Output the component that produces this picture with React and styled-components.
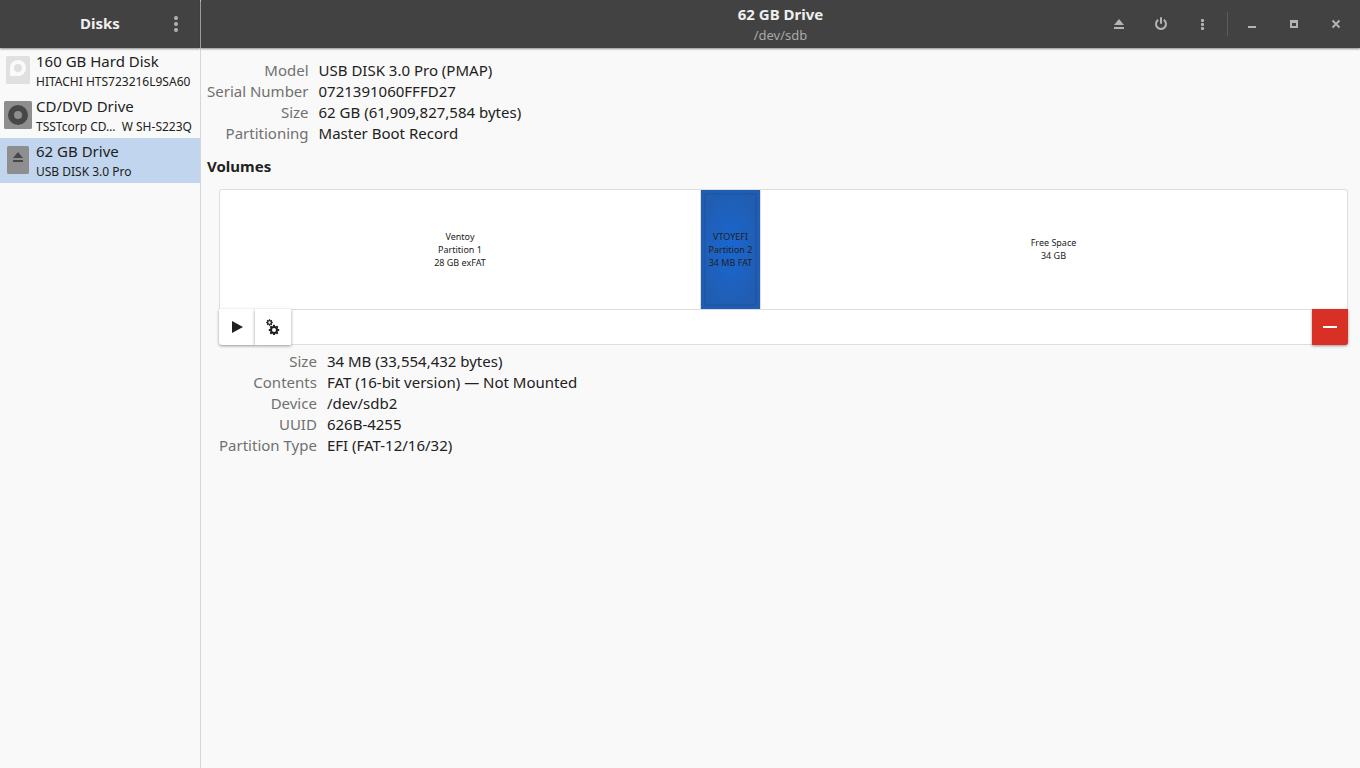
import React, { useState } from "react";
import styled, { createGlobalStyle } from "styled-components";

const GlobalStyle = createGlobalStyle`
  *, *::before, *::after { box-sizing: border-box; }
  body {
    margin: 0;
    background: #f9f9f9;
    color: #212121;
    font-family: "Noto Sans", sans-serif;
    font-size: 15px;
    line-height: 21px;
  }
  button { font: inherit; color: inherit; }
`;

const Window = styled.div`
  display: grid;
  grid-template-columns: 201px minmax(0, 1fr);
  min-height: 100vh;
`;

const Sidebar = styled.aside`
  border-right: 1px solid #d6d6d6;
`;

const HeaderBar = styled.header`
  display: grid;
  grid-template-columns: 1fr auto 1fr;
  align-items: center;
  height: 48px;
  padding: 0 ${(p) => p.$inset}px;
  background: #424242;
  color: #efefef;
  box-shadow: 0 1px 2px rgba(0, 0, 0, 0.45);
`;

const HeaderTitle = styled.div`
  grid-column: 2;
  text-align: center;
`;

const Title = styled.h1`
  margin: 0;
  padding-bottom: 2px;
  font-size: 15px;
  line-height: 20px;
  font-weight: 700;
`;

const Subtitle = styled.p`
  margin: 0;
  font-size: 13px;
  line-height: 18px;
  color: #a9a9a9;
`;

const HeaderActions = styled.div`
  display: flex;
  align-items: center;
  justify-content: flex-end;
`;

const HeaderButton = styled.button`
  display: flex;
  align-items: center;
  justify-content: center;
  flex: none;
  width: ${(p) => p.$width || 42}px;
  height: 36px;
  padding: 0;
  border: 0;
  background: none;
  color: #b4b4b4;
`;

const HeaderDivider = styled.span`
  width: 1px;
  height: 24px;
  margin: 0 3px;
  background: #5c5c5c;
`;

const DriveList = styled.ul`
  margin: 0;
  padding: 0;
  list-style: none;
`;

const DriveButton = styled.button`
  display: grid;
  grid-template-columns: 36px minmax(0, 1fr);
  align-items: start;
  width: 100%;
  height: 45px;
  padding: 3px 0 0;
  border: 0;
  text-align: left;
  background: ${(p) => (p.$selected ? "#c2d5ee" : "transparent")};
`;

const DriveIcon = styled.svg`
  width: 36px;
  height: 36px;
  margin-top: 1px;
`;

const DriveName = styled.span`
  display: block;
  line-height: 20px;
  margin-bottom: 3px;
`;

const DriveModel = styled.span`
  display: block;
  font-size: 12px;
  line-height: 16px;
  white-space: pre;
`;

const Content = styled.main`
  padding: 12px 12px 24px 6px;
`;

const Details = styled.dl`
  display: grid;
  grid-template-columns: max-content minmax(0, 1fr);
  column-gap: 10px;
  margin: 0;
`;

const Label = styled.dt`
  text-align: right;
  color: #707070;
`;

const Value = styled.dd`
  margin: 0;
`;

const SectionTitle = styled.h2`
  margin: 12px 0;
  font-size: 15px;
  line-height: 21px;
  font-weight: 700;
`;

const Volumes = styled.section`
  margin-left: 12px;
`;

const VolumeMap = styled.div`
  display: flex;
  height: 120px;
  border: 1px solid #dedede;
  border-bottom: 0;
  border-radius: 3px 3px 0 0;
  background: #ffffff;
`;

const Volume = styled.button`
  flex: ${(p) => p.$share} 1 0;
  min-width: 0;
  padding: 0;
  border: 0;
  font-size: 9px;
  line-height: 13px;
  white-space: nowrap;
  background: transparent;

  & + & {
    box-shadow: inset 1px 0 #dedede;
  }

  &[aria-pressed="true"] {
    background: radial-gradient(ellipse at center, #1967d2, #215db0 75%);
  }
`;

const VolumeText = styled.span`
  display: flex;
  flex-direction: column;
  justify-content: center;
  align-items: center;
  height: ${(p) => (p.$selected ? "calc(100% - 6px)" : "100%")};
  margin: ${(p) => (p.$selected ? "3px 3px 3px 4px" : "0")};
  padding-bottom: 1px;
  border: 2px solid ${(p) => (p.$selected ? "rgba(20, 70, 150, 0.25)" : "transparent")};
  border-radius: 3px;
`;

const Toolbar = styled.div`
  display: flex;
  height: 36px;
  margin-bottom: 6px;
  border: 1px solid #dedede;
  border-radius: 0 0 3px 3px;
  background: #ffffff;
`;

const ToolButton = styled.button`
  display: flex;
  align-items: center;
  justify-content: center;
  width: 36px;
  height: 36px;
  margin: -1px 0;
  padding: 0;
  border: 0;
  background: #ffffff;
  color: #212121;
  box-shadow: 0 1px 3px rgba(0, 0, 0, 0.4);

  &:first-child {
    margin-left: -1px;
    border-radius: 0 0 0 3px;
  }
`;

const DeleteButton = styled(ToolButton)`
  margin-left: auto;
  margin-right: -1px;
  border-radius: 0 0 3px 0;
  background: #d93025;
  color: #ffffff;
`;

const Glyph = ({ size = 16, children }) => (
  <svg width={size} height={size} viewBox="0 0 16 16" fill="currentColor" aria-hidden="true">
    {children}
  </svg>
);

const MenuGlyph = () => (
  <Glyph>
    <circle cx="8" cy="2" r="2" />
    <circle cx="8" cy="8" r="2" />
    <circle cx="8" cy="14" r="2" />
  </Glyph>
);

const SmallMenuGlyph = () => (
  <Glyph>
    <rect x="6" y="3" width="3" height="3" rx="1" />
    <rect x="6" y="7" width="3" height="3" rx="1" />
    <rect x="6" y="11" width="3" height="3" rx="1" />
  </Glyph>
);

const EjectGlyph = () => (
  <Glyph>
    <path d="M8 3 13 9H3z" />
    <rect x="3" y="11" width="10" height="2" />
  </Glyph>
);

const PowerGlyph = () => (
  <Glyph>
    <path d="M5.2 3.8a5 5 0 1 0 5.6 0" fill="none" stroke="currentColor" strokeWidth="2" />
    <rect x="7" y="1" width="2" height="7" rx="1" />
  </Glyph>
);

const gearTeeth = [0, 45, 90, 135, 180, 225, 270, 315];

const Gear = ({ x, y, radius, stroke, tooth }) => (
  <g transform={`translate(${x} ${y})`}>
    <circle r={radius} fill="none" stroke="currentColor" strokeWidth={stroke} />
    {gearTeeth.map((angle) => (
      <rect
        key={angle}
        x={-tooth / 2}
        y={-(radius + stroke / 2 + tooth * 0.6)}
        width={tooth}
        height={tooth}
        transform={`rotate(${angle})`}
      />
    ))}
  </g>
);

const HardDiskIcon = () => (
  <DriveIcon viewBox="0 0 36 36" aria-hidden="true">
    <rect x="6" y="4" width="24" height="28" rx="1.5" fill="#e0e0e0" />
    <path d="M10 16a8 8 0 1 1 8 8h-7a1 1 0 0 1-1-1z" fill="#fafafa" />
    <circle cx="18" cy="16" r="4" fill="#e0e0e0" />
  </DriveIcon>
);

const OpticalIcon = () => (
  <DriveIcon viewBox="0 0 36 36" aria-hidden="true">
    <rect x="4" y="4" width="28" height="28" rx="1.5" fill="#8e8e8e" />
    <circle cx="18" cy="18" r="10" fill="#474747" />
    <circle cx="18" cy="18" r="4" fill="#8e8e8e" />
  </DriveIcon>
);

const RemovableIcon = () => (
  <DriveIcon viewBox="0 0 36 36" aria-hidden="true">
    <rect x="7" y="4" width="22" height="28" rx="1.5" fill="#8e8e8e" />
    <path d="m18 10 5 6H13z" fill="#474747" />
    <rect x="13" y="18" width="10" height="2" fill="#474747" />
  </DriveIcon>
);

const drives = [
  { name: "160 GB Hard Disk", model: "HITACHI HTS723216L9SA60", Icon: HardDiskIcon },
  { name: "CD/DVD Drive", model: "TSSTcorp CD…  W SH-S223Q", Icon: OpticalIcon },
  { name: "62 GB Drive", model: "USB DISK 3.0 Pro", Icon: RemovableIcon },
];

const driveDetails = [
  ["Model", "USB DISK 3.0 Pro (PMAP)"],
  ["Serial Number", "0721391060FFFD27"],
  ["Size", "62 GB (61,909,827,584 bytes)"],
  ["Partitioning", "Master Boot Record"],
];

const volumes = [
  { share: 480, lines: ["Ventoy", "Partition 1", "28 GB exFAT"] },
  { share: 60, lines: ["VTOYEFI", "Partition 2", "34 MB FAT"] },
  { share: 587, lines: ["Free Space", "34 GB"] },
];

const volumeDetails = [
  ["Size", "34 MB (33,554,432 bytes)"],
  ["Contents", "FAT (16-bit version) — Not Mounted"],
  ["Device", "/dev/sdb2"],
  ["UUID", "626B-4255"],
  ["Partition Type", "EFI (FAT-12/16/32)"],
];

const DetailList = ({ items }) => (
  <Details>
    {items.map(([label, value]) => (
      <React.Fragment key={label}>
        <Label>{label}</Label>
        <Value>{value}</Value>
      </React.Fragment>
    ))}
  </Details>
);

export default function App() {
  const [drive, setDrive] = useState(2);
  const [volume, setVolume] = useState(1);

  return (
    <>
      <GlobalStyle />
      <Window>
        <Sidebar>
          <HeaderBar $inset={6}>
            <HeaderTitle>
              <Title>Disks</Title>
            </HeaderTitle>
            <HeaderActions>
              <HeaderButton $width={36} aria-label="Application menu">
                <MenuGlyph />
              </HeaderButton>
            </HeaderActions>
          </HeaderBar>
          <DriveList>
            {drives.map(({ name, model, Icon }, i) => (
              <li key={name}>
                <DriveButton
                  $selected={i === drive}
                  aria-pressed={i === drive}
                  onClick={() => setDrive(i)}
                >
                  <Icon />
                  <span>
                    <DriveName>{name}</DriveName>
                    <DriveModel>{model}</DriveModel>
                  </span>
                </DriveButton>
              </li>
            ))}
          </DriveList>
        </Sidebar>

        <div>
          <HeaderBar $inset={3}>
            <HeaderTitle>
              <Title>62 GB Drive</Title>
              <Subtitle>/dev/sdb</Subtitle>
            </HeaderTitle>
            <HeaderActions>
              <HeaderButton aria-label="Eject">
                <EjectGlyph />
              </HeaderButton>
              <HeaderButton aria-label="Power off">
                <PowerGlyph />
              </HeaderButton>
              <HeaderButton aria-label="Drive menu">
                <SmallMenuGlyph />
              </HeaderButton>
              <HeaderDivider />
              <HeaderButton aria-label="Minimize">
                <Glyph>
                  <rect x="4" y="10" width="8" height="2" />
                </Glyph>
              </HeaderButton>
              <HeaderButton aria-label="Maximize">
                <Glyph>
                  <path d="M4 4h8v8H4zM6 7v3h4V7z" fillRule="evenodd" />
                </Glyph>
              </HeaderButton>
              <HeaderButton aria-label="Close">
                <Glyph>
                  <path d="m4.5 4.5 7 7m0-7-7 7" stroke="currentColor" strokeWidth="2" />
                </Glyph>
              </HeaderButton>
            </HeaderActions>
          </HeaderBar>

          <Content>
            <DetailList items={driveDetails} />
            <SectionTitle>Volumes</SectionTitle>
            <Volumes>
              <VolumeMap>
                {volumes.map(({ share, lines }, i) => (
                  <Volume
                    key={lines[0]}
                    $share={share}
                    aria-pressed={i === volume}
                    onClick={() => setVolume(i)}
                  >
                    <VolumeText $selected={i === volume}>
                      {lines.map((line) => (
                        <span key={line}>{line}</span>
                      ))}
                    </VolumeText>
                  </Volume>
                ))}
              </VolumeMap>
              <Toolbar>
                <ToolButton aria-label="Mount selected partition">
                  <Glyph>
                    <path d="M3 2v12l11-6z" />
                  </Glyph>
                </ToolButton>
                <ToolButton aria-label="Additional partition options">
                  <Glyph>
                    <Gear x={4.5} y={3.5} radius={1.9} stroke={1.4} tooth={1.2} />
                    <Gear x={9} y={11} radius={3} stroke={2} tooth={2} />
                  </Glyph>
                </ToolButton>
                <DeleteButton aria-label="Delete selected partition">
                  <Glyph>
                    <rect x="1" y="7" width="14" height="2" />
                  </Glyph>
                </DeleteButton>
              </Toolbar>
              <DetailList items={volumeDetails} />
            </Volumes>
          </Content>
        </div>
      </Window>
    </>
  );
}
